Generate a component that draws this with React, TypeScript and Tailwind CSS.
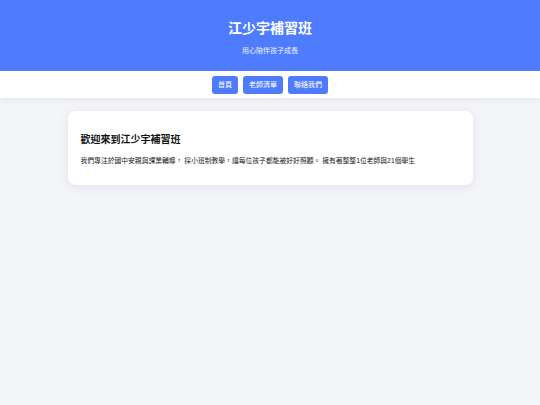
export default function App() {
  const font = { fontFamily: '"Liberation Sans", "Noto Sans CJK TC", sans-serif' };
  const links = ['首頁', '老師清單', '聯絡我們'];

  return (
    <div className="min-h-[405px] bg-[#f4f5f9]" style={font}>
      <header className="h-[71px] bg-[#4f7cfe] text-white flex flex-col items-center pt-[19px]">
        <h1 className="text-[14px] leading-[18px] font-bold">江少宇補習班</h1>
        <p className="mt-[9px] text-[7px] leading-[10px] text-[#eef2ff]">用心陪伴孩子成長</p>
      </header>

      <nav className="h-[27px] bg-white flex items-center justify-center gap-[5px] shadow-[0_2px_6px_rgba(0,0,0,0.07)] relative">
        {links.map((l) => (
          <button
            key={l}
            className="h-[18px] px-[6px] rounded-[3px] bg-[#4f7cfe] text-white text-[7px] leading-[18px] font-normal"
          >
            {l}
          </button>
        ))}
      </nav>

      <main className="pt-[13px]">
        <section className="mx-auto w-[405px] bg-white rounded-[8px] px-[13px] pt-[22px] pb-[19px] shadow-[0_2px_12px_rgba(0,0,0,0.08)]">
          <h2 className="text-[10px] leading-[14px] font-bold text-[#111]">歡迎來到江少宇補習班</h2>
          <p className="mt-[9px] text-[6.8px] leading-[10px] text-[#222]">
            我們專注於國中安親與課業輔導， 採小班制教學，讓每位孩子都能被好好照顧。 擁有著整整1位老師與21個學生
          </p>
        </section>
      </main>
    </div>
  );
}
